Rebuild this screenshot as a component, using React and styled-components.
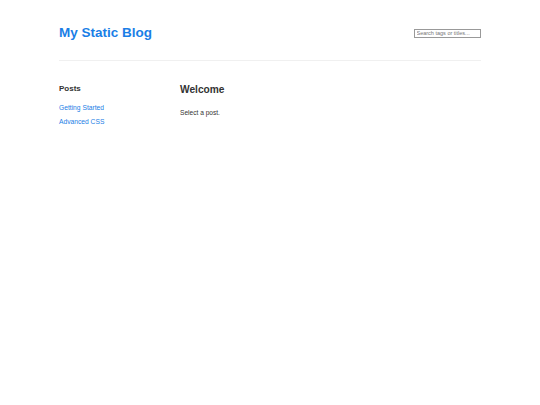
import React from "react";
import styled, { createGlobalStyle } from "styled-components";

const Global = createGlobalStyle`
  html, body { margin: 0; padding: 0; background: #fff; }
  body { font-family: "Liberation Sans", Arial, sans-serif; color: #333; }
`;

const Page = styled.div`
  width: 422px;
  margin: 0 auto;
  padding-top: 24px;
`;

const Header = styled.header`
  display: flex;
  justify-content: space-between;
  align-items: center;
  padding-bottom: 18px;
  border-bottom: 1px solid #f0f0f0;
`;

const Title = styled.h1`
  margin: 0;
  font-size: 13.5px;
  line-height: 18px;
  font-weight: bold;
  color: #1a7ee6;
`;

const Search = styled.input`
  width: 67px;
  height: 9px;
  box-sizing: border-box;
  border: 1px solid #999;
  padding: 0 1.5px;
  font-family: "Liberation Sans", Arial, sans-serif;
  font-size: 5.5px;
  color: #333;
  outline: none;
  &::placeholder { color: #777; }
`;

const Body = styled.div`
  display: grid;
  grid-template-columns: 121px 1fr;
  padding-top: 23px;
`;

const Sidebar = styled.aside``;

const SideTitle = styled.h3`
  margin: 0 0 10px;
  font-size: 8px;
  line-height: 10px;
  font-weight: bold;
  color: #333;
`;

const PostLink = styled.a`
  display: block;
  font-size: 6.7px;
  line-height: 8px;
  color: #1a7ee6;
  text-decoration: none;
  margin-bottom: 6px;
`;

const Main = styled.main``;

const Heading = styled.h2`
  margin: 0 0 13px;
  font-size: 10.2px;
  line-height: 12px;
  font-weight: bold;
  color: #333;
`;

const Text = styled.p`
  margin: 0;
  font-size: 6.6px;
  line-height: 8px;
  color: #333;
`;

export default function App() {
  return (
    <>
      <Global />
      <Page>
        <Header>
          <Title>My Static Blog</Title>
          <Search placeholder="Search tags or titles..." />
        </Header>
        <Body>
          <Sidebar>
            <SideTitle>Posts</SideTitle>
            <PostLink href="#">Getting Started</PostLink>
            <PostLink href="#">Advanced CSS</PostLink>
          </Sidebar>
          <Main>
            <Heading>Welcome</Heading>
            <Text>Select a post.</Text>
          </Main>
        </Body>
      </Page>
    </>
  );
}
